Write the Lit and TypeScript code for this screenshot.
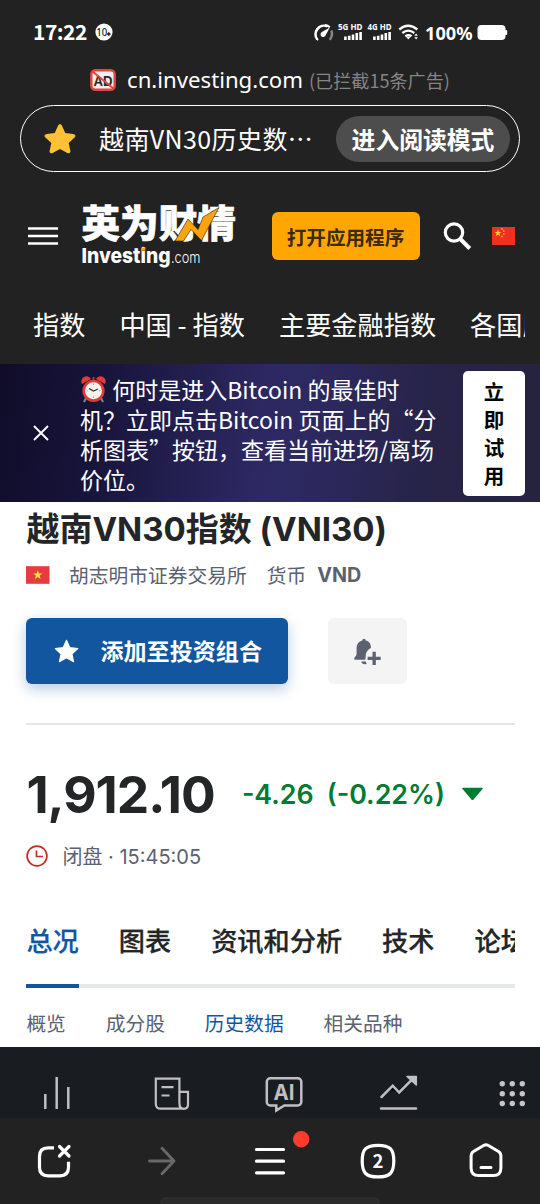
import { LitElement, html, css, svg } from "lit";
import { customElement } from "lit/decorators.js";

const STAR = "M12 1.6c.7 0 1.1.5 1.4 1.1l2.3 5.1 5.6.6c1.6.2 2.1 1.5 1 2.6l-4.200 3.800 1.200 5.500c.3 1.500-.8 2.200-2.100 1.500L12 19l-5.200 2.800c-1.300.7-2.400 0-2.100-1.500l1.200-5.500-4.200-3.800c-1.100-1.100-.6-2.400 1-2.600l5.600-.6 2.300-5.100c.3-.6.7-1.100 1.400-1.100z";

@customElement("status-bar")
export class StatusBar extends LitElement {
  static styles = css`
    :host { display: flex; align-items: center; height: 64px; padding: 0 33px; box-sizing: border-box; color: #fff; }
    .time { font: 700 21px/24px "Noto Sans CJK SC", sans-serif; width: 55px; white-space: nowrap; letter-spacing: -0.5px; margin-top: -2px; }
    .badge { margin-left: 7px; }
    .icons { margin-left: auto; margin-right: -2px; display: block; }
    svg { display: block; font-family: "Noto Sans", sans-serif; }
  `;
  render() {
    const bars = (x: number) => svg`
      <path d="M${x + 1.4} 40v-3.400M${x + 5.200} 40v-4.300M${x + 9} 40v-5.600M${x + 12.800} 40v-7M${x + 16.600} 40v-8" stroke="#fff" stroke-width="2.600"/>`;
    return html`
      <div class="time">17:22</div>
      <svg class="badge" width="18" height="18" viewBox="0 0 18 18">
        <circle cx="9" cy="9" r="8.600" fill="#fff"/>
        <text x="1.200" y="13" font-size="11.500" font-weight="500" fill="#222" textLength="11" lengthAdjust="spacingAndGlyphs">10</text>
        <path d="M12 11h3.600M13.800 9.200v3.600" stroke="#222" stroke-width="1.500"/>
      </svg>
      <svg class="icons" width="196" height="30" viewBox="313 17 196 30" fill="none">
        <path d="M317.300 39.500a8.600 8.600 0 0 1 10-13.200" stroke="#fff" stroke-width="2.600"/>
        <path d="M317.800 38.800l-1 1.200M325 25.200q3 .3 4.800 2" stroke="#fff" stroke-width="2.200"/>
        <path d="M331.300 30.500q2 5-1.600 9.300" stroke="#888" stroke-width="2.400"/>
        <path d="M329.800 27.400L325.800 35a2.700 2.700 0 1 1-3.900-3.100z" fill="#fff"/>
        <text x="338" y="29.600" font-size="8.200" font-weight="700" fill="#fff" textLength="24.500" lengthAdjust="spacingAndGlyphs">5G HD</text>
        <text x="367.500" y="29.600" font-size="8.200" font-weight="700" fill="#fff" textLength="24" lengthAdjust="spacingAndGlyphs">4G HD</text>
        ${bars(344)}${bars(373)}
        <path d="M399.300 29.500q8.800-7.400 18 0M402.300 33q6-4.700 12 0M405.300 36.200q3.200-2.200 6.200 0" stroke="#fff" stroke-width="2.300"/>
        <path d="M405.800 36.500h5l-2.500 3.100z" fill="#fff"/>
        <path d="M414.300 35.800l1.800-2.300 1.800 2.300zM414.300 37.200l1.800 2.300 1.800-2.300z" fill="#fff"/>
        <text x="425" y="39.800" font-size="18.500" font-weight="700" fill="#fff" textLength="47.500" lengthAdjust="spacingAndGlyphs">100%</text>
        <rect x="477.500" y="25" width="28" height="15" rx="4" fill="#fff"/>
        <rect x="505" y="30" width="2.200" height="5" rx="1" fill="#fff"/>
      </svg>`;
  }
}

@customElement("browser-address")
export class BrowserAddress extends LitElement {
  static styles = css`
    :host { display: flex; flex-direction: column; height: 116px; color: #fff; }
    .url { display: flex; align-items: center; height: 32px; padding-left: 90px; margin-bottom: 9px; white-space: nowrap; }
    .host { font: 400 22.2px/32px "Noto Sans", sans-serif; margin-left: 11px; width: 176px; }
    .count { font: 400 18.1px/32px "Noto Sans CJK SC", sans-serif; color: #858585; margin: 0 0 0 6px; }
    .pill { display: flex; align-items: center; height: 67px; margin: 0 20px; box-sizing: border-box; border: 1.6px solid #fff; border-radius: 34px; padding: 0 9px 0 22px; }
    .title { font: 400 25px/34px "Noto Sans CJK SC", sans-serif; margin-left: 22px; flex: 1; min-width: 0; white-space: nowrap; letter-spacing: 0.4px; margin-top: -2px; }
    .mode { height: 46px; width: 174px; flex: none; border-radius: 23px; background: #4d4d4d; font: 700 23.8px/45px "Noto Sans CJK SC", sans-serif; text-align: center; }
  `;
  render() {
    return html`
      <div class="url">
        <svg width="26" height="22" viewBox="0 0 26 22">
          <rect x="1.300" y="1.300" width="23.400" height="19.400" rx="4" fill="#f3eded" stroke="#e0463f" stroke-width="2.400"/>
          <text x="3.500" y="16.600" font-family="Liberation Sans" font-weight="700" font-size="15.500" fill="#292929" textLength="19" lengthAdjust="spacingAndGlyphs">AD</text>
          <path d="M2.500 2.500l21 17" stroke="#e0463f" stroke-width="2"/>
        </svg>
        <span class="host">cn.investing.com</span><span class="count">(已拦截15条广告)</span>
      </div>
      <div class="pill">
        <svg width="34" height="34" viewBox="0 0 24 24"><path fill="#ffc237" d="${STAR}"/></svg>
        <span class="title">越南VN30历史数⋯</span>
        <span class="mode">进入阅读模式</span>
      </div>`;
  }
}

@customElement("site-header")
export class SiteHeader extends LitElement {
  static styles = css`
    :host { display: block; height: 184px; overflow: hidden; color: #fff; }
    .row { display: flex; align-items: center; height: 112px; padding-left: 28px; }
    .logo { margin-left: 22px; overflow: visible; }
    .open { width: 148px; height: 48px; margin-left: 33.5px; border-radius: 6px; background: #ffa602; color: #3b2b0b; font: 700 19.6px/49px "Noto Sans CJK SC", sans-serif; text-align: center; }
    .search { margin-left: 23px; }
    .flag { margin-left: 20px; }
    nav { display: flex; gap: 34px; margin: 13px 15px 0 33px; overflow: hidden; white-space: nowrap; font: 400 26.2px/38px "Noto Sans CJK SC", sans-serif; }
  `;
  render() {
    return html`
      <div class="row">
        <svg width="30" height="18" viewBox="0 0 30 18"><path d="M0 1.500h30M0 9h30M0 16.500h30" stroke="#fff" stroke-width="2.500"/></svg>
        <svg class="logo" width="158" height="68" viewBox="80 202 158 68">
          <text x="81.500" y="237.300" font-family="Noto Sans CJK SC" font-weight="900" font-size="38" fill="#fff" stroke="#fff" stroke-width=".6" textLength="154.500" lengthAdjust="spacingAndGlyphs">英为财情</text>
          <path d="M175 241L188 219l10 10.500 5-12.500 16-9.500-17.500 33-10.500-11-7.500 11.500z" fill="#ffa30b" stroke="#222" stroke-width=".6"/>
          <text x="81.500" y="263" font-family="Inter" font-weight="800" font-size="20.500" fill="#fff" textLength="89" lengthAdjust="spacingAndGlyphs">Investing</text>
          <path d="M140.800 250.700l.5-2.800 4-1v3.800z" fill="#ffa30b"/>
          <text x="171" y="263" font-family="Inter" font-weight="300" font-size="16" fill="#fff" textLength="29.500" lengthAdjust="spacingAndGlyphs">.com</text>
        </svg>
        <span class="open">打开应用程序</span>
        <svg class="search" width="29" height="28" viewBox="0 0 29 28" fill="none" stroke="#fff"><circle cx="11" cy="10.500" r="8.700" stroke-width="3.200"/><path d="M17.300 17l9.500 9.500" stroke-width="4"/></svg>
        <svg class="flag" width="23" height="18" viewBox="0 0 23 18"><rect width="23" height="18" fill="#ef2f1f"/>
          <path d="M6 2.500l.9 2.500h2.500L7.400 6.600l.8 2.600L6 7.600 3.800 9.200l.8-2.600L2.600 5h2.500z" fill="#ffcf32"/>
          <path d="M9.300 2h1.600M11.100 4h1.400M11 7h1.500M9.300 9.500h1.500" stroke="#f9b52d" stroke-width="1.400"/></svg>
      </div>
      <nav><span>指数</span><span>中国 - 指数</span><span>主要金融指数</span><span>各国股指</span></nav>`;
  }
}

@customElement("promo-banner")
export class PromoBanner extends LitElement {
  static styles = css`
    :host { display: flex; align-items: center; height: 138px; box-sizing: border-box; padding: 0 15px 0 33px; color: #fff; background: linear-gradient(97deg, #100c29 0%, #17143a 18%, #2d2861 48%, #2d2961 56%, #272449 78%, #25233f 100%); }
    p { margin: 2px 0 0 31px; flex: 1; white-space: nowrap; font: 400 23px/30px "Noto Sans CJK SC", sans-serif; }
    .clock { display: inline-block; vertical-align: -4px; margin: 0; }
    .cta { width: 62px; height: 125px; box-sizing: border-box; padding-top: 6px; border-radius: 5px; background: #fff; color: #050505; display: flex; flex-direction: column; align-items: center; font: 700 20.5px/28px "Noto Sans CJK SC", sans-serif; }
  `;
  render() {
    return html`
      <svg width="16" height="16" viewBox="0 0 16 16"><path d="M1 1l14 14M15 1L1 15" stroke="#fff" stroke-width="1.900"/></svg>
      <p><svg class="clock" width="27" height="27" viewBox="0 0 27 27">
          <path d="M6 22l-2 4M21 22l2 4" stroke="#6c8fa3" stroke-width="2"/>
          <path d="M2 8a5 5 0 0 1 9-5zM16 3a5 5 0 0 1 9 5z" fill="#e63a35"/>
          <path d="M13.500 1v4" stroke="#b9392f" stroke-width="2"/>
          <circle cx="13.500" cy="14.800" r="9.800" fill="#f6f3ec" stroke="#df3b34" stroke-width="2.600"/>
          <path d="M9 12.500l4.500 2.500 4.500-2" fill="none" stroke="#333" stroke-width="1.200"/>
          <path d="M13.500 7.500v1.500M13.500 20.500V22M6.500 14.800H8M19 14.800h1.500" stroke="#888" stroke-width=".7"/>
        </svg> 何时是进入Bitcoin 的最佳时<br>机？立即点击Bitcoin 页面上的“分<br>析图表”按钮，查看当前进场/离场<br>价位。</p>
      <div class="cta"><span>立</span><span>即</span><span>试</span><span>用</span></div>`;
  }
}

@customElement("index-summary")
export class IndexSummary extends LitElement {
  static styles = css`
    :host { display: block; height: 545px; overflow: hidden; background: #fff; padding: 0 25px 0 26.4px; box-sizing: border-box; color: #232526; font-family: Inter, "Noto Sans CJK SC", sans-serif; }
    h1 { margin: 6px 0 0; font-size: 33px; line-height: 42px; font-weight: 700; white-space: nowrap; }
    .meta { display: flex; align-items: center; height: 30px; margin-top: 10px; font-size: 19.75px; color: #5b616e; white-space: nowrap; }
    .meta span { margin-top: -2px; }
    .market { margin: 0 20px 0 19px; }
    .meta b { margin-left: 11px; font-weight: 700; }
    .actions { display: flex; gap: 40px; margin-top: 28px; height: 66px; }
    .add { display: flex; align-items: center; width: 262px; box-sizing: border-box; padding-left: 27px; gap: 20px; border-radius: 6px; background: #1256a0; color: #fff; font: 700 23.1px/64px "Noto Sans CJK SC", sans-serif; box-shadow: 0 5px 14px rgba(18, 86, 160, 0.3); white-space: nowrap; }
    .add span { margin-bottom: 2px; }
    .alert { display: flex; align-items: center; justify-content: center; width: 79px; border-radius: 6px; background: #f4f4f4; }
    .rule { height: 1.5px; margin-top: 39px; background: #e6e6e8; }
    .quote { display: flex; align-items: center; height: 60px; margin-top: 39px; white-space: nowrap; }
    .price { font-size: 51.5px; font-weight: 700; width: 215.5px; letter-spacing: -1px; }
    .change { color: #007c32; font-size: 26.8px; font-weight: 600; }
    .pct { margin-left: 13px; }
    .down { margin-left: 17px; }
    .session { display: flex; align-items: center; height: 30px; margin-top: 17px; gap: 14px; font-size: 20px; color: #5b616e; }
    .clip { overflow: hidden; height: 118px; margin-top: 54px; }
    .tabs { display: flex; gap: 40px; height: 59px; border-bottom: 4px solid #e6e9eb; margin-bottom: 0; box-sizing: content-box; }
    .tabs span { white-space: nowrap; font: 500 26.2px/31px "Noto Sans CJK SC", sans-serif; -webkit-text-stroke: 0.25px currentColor; height: 59px; flex: none; border-bottom: 4px solid transparent; }
    .tabs .active { color: #1256a0; border-color: #1256a0; }
    .subtabs { display: flex; gap: 40px; font: 400 19.7px/30px "Noto Sans CJK SC", sans-serif; color: #5b616e; margin-top: 20px; white-space: nowrap; }
    .subtabs .active { color: #1256a0; }
  `;
  render() {
    return html`
      <h1>越南VN30指数 (VNI30)</h1>
      <div class="meta">
        <svg width="23.500" height="18" viewBox="0 0 24 18"><rect width="24" height="18" fill="#e73b40"/><path d="M12 4.200l1.200 3.300h3.500l-2.800 2.100 1 3.400-2.900-2-2.900 2 1-3.400-2.800-2.100h3.500z" fill="#ffe83d"/></svg>
        <span class="market">胡志明市证券交易所</span><span>货币</span><b>VND</b>
      </div>
      <div class="actions">
        <div class="add"><svg width="27" height="27" viewBox="0 0 24 24"><path fill="#fff" stroke="#fff" stroke-linejoin="round" d="M12 2l3 6.600 7 .8-5.200 4.800 1.500 6.900L12 17.600l-6.300 3.500 1.500-6.900L2 9.400l7-.8z"/></svg><span>添加至投资组合</span></div>
        <div class="alert"><svg width="27" height="27" viewBox="0 0 27 27" fill="#5b616e"><path d="M10 .8c1 0 1.600.7 1.600 1.800 3.500.8 5.200 3 5.400 7.200-3.700 2-5.500 5-5.300 8.700l-.4 3.300H.4v-2.300c1.300-1 2.200-2.300 2.200-4.600v-4.300c0-4.300 2-7.200 5.800-8C8.400 1.500 9 .8 10 .8zM7.200 23.500h4.500l1 2.400c-2.500 1-5-.1-5.500-2.400z"/><path d="M18.500 13.800h3.300v5h4.900v3.300h-4.900V27h-3.300v-4.900h-4.900v-3.300h4.900z"/></svg></div>
      </div>
      <div class="rule"></div>
      <div class="quote"><span class="price">1,912.10</span><span class="change">-4.26</span><span class="change pct">(-0.22%)</span>
        <svg class="down" width="21" height="14" viewBox="0 0 21 14"><path d="M1 .8h19c.8 0 1 .8.5 1.300l-9 10.500q-1 1-2 0L.5 2.100C0 1.600.2.800 1 .8z" fill="#007c32"/></svg></div>
      <div class="session"><svg width="22" height="22" viewBox="0 0 22 22" fill="none" stroke="#bd3024" stroke-width="1.700"><circle cx="11" cy="11" r="9.900"/><path d="M10.500 5.500v6H17"/></svg><span>闭盘 · 15:45:05</span></div>
      <div class="clip">
        <div class="tabs"><span class="active">总况</span><span>图表</span><span>资讯和分析</span><span>技术</span><span>论坛</span></div>
        <div class="subtabs"><span>概览</span><span>成分股</span><span class="active">历史数据</span><span>相关品种</span></div>
      </div>`;
  }
}

@customElement("bottom-bars")
export class BottomBars extends LitElement {
  static styles = css`
    :host { display: block; }
    svg { display: block; }
    .site { background: #191c21; height: 71px; display: flex; align-items: center; }
    .browser { background: #222; height: 86px; }
  `;
  render() {
    return html`
      <div class="site"><svg width="540" height="71" viewBox="0 1047 540 71" fill="none" stroke="#bfc0c4">
        <path d="M45.300 1094v15M56.700 1077v32M68.300 1087v22" stroke-width="2.500"/>
        <path d="M155.800 1078.700h23.600v24c0 4 1.200 6 4.200 6h-22.800c-3.500 0-5-2-5-5zM179.500 1091.800h8.500v12.500c0 3-1.500 4.500-4.200 4.500s-4.300-1.500-4.300-4.500M161.500 1087.200h12M161.500 1095.500h8" stroke-width="2.200"/>
        <path d="M270.300 1078.300h27.500a3.500 3.500 0 0 1 3.500 3.500v20.200a3.500 3.500 0 0 1-3.500 3.500h-13.500l-8 5v-5h-6a3.500 3.500 0 0 1-3.500-3.500v-20.200a3.500 3.500 0 0 1 3.500-3.500z" stroke-width="2.500"/>
        <text x="273.500" y="1100" fill="#bfc0c4" stroke="none" font-family="Inter" font-weight="700" font-size="21" textLength="21" lengthAdjust="spacingAndGlyphs">AI</text>
        <path d="M389.500 1090l4-3.500 3.500 5z" fill="#050505" stroke="none"/>
        <path d="M381.500 1097l11.200-11.300 6.500 6.800 13-13.200M381 1108.600h35" stroke-width="2.500" stroke-linecap="round"/>
        <path d="M407 1076.500h9.300v8.500z" fill="#bfc0c4" stroke-linejoin="round" stroke-width="1.500"/>
        ${[1083.800, 1093.700, 1103.500].map((y) => [502.300, 512.300, 522.300].map((x) => svg`<circle cx="${x}" cy="${y}" r="2.700" fill="#c5c6c9" stroke="none"/>`))}
      </svg></div>
      <div class="browser"><svg width="540" height="86" viewBox="0 1118 540 86" fill="none" stroke="#fff" stroke-width="3.200" stroke-linecap="round" stroke-linejoin="round">
        <path d="M54 1147.800h-6q-8.500 0-8.500 8.500v11q0 8.500 8.500 8.500h12q8.500 0 8.500-8.500v-5.500" stroke-linecap="butt"/>
        <path d="M59.500 1146.500l9.500 9.500M69 1146.500l-9.500 9.500"/>
        <path d="M149.500 1161h24.500M162 1148.300l12 12.700-12 12.700" stroke="#696969" stroke-width="2.800"/>
        <path d="M256.500 1149.500h27M256.500 1161.200h27M256.500 1172.800h27"/>
        <circle cx="301.200" cy="1139.200" r="8.200" fill="#ff3b30" stroke="none"/>
        <path d="M378 1145.300c12 0 15.800 3.800 15.800 15.800s-3.800 15.800-15.800 15.800-15.800-3.800-15.800-15.800 3.800-15.800 15.800-15.800z"/>
        <text x="378" y="1168" text-anchor="middle" fill="#fff" stroke="none" font-family="Noto Sans CJK SC" font-weight="700" font-size="18.500">2</text>
        <path d="M484 1145.300q2-1 4 0l10.500 6.200q2.400 1.500 2.400 4.500v12q0 7.500-7.500 7.500h-14.800q-7.500 0-7.500-7.500v-12q0-3 2.400-4.500zM481 1167.500h10" stroke-width="3"/>
        <rect x="161" y="1198" width="218" height="10" rx="4" fill="#2b2b2b" stroke="#323232" stroke-width="1"/>
      </svg></div>`;
  }
}

@customElement("app-root")
export class AppRoot extends LitElement {
  static styles = css`
    :host { display: block; width: 540px; height: 1204px; overflow: hidden; background: #222; }
  `;
  render() {
    return html`<status-bar></status-bar><browser-address></browser-address><site-header></site-header><promo-banner></promo-banner><index-summary></index-summary><bottom-bars></bottom-bars>`;
  }
}
